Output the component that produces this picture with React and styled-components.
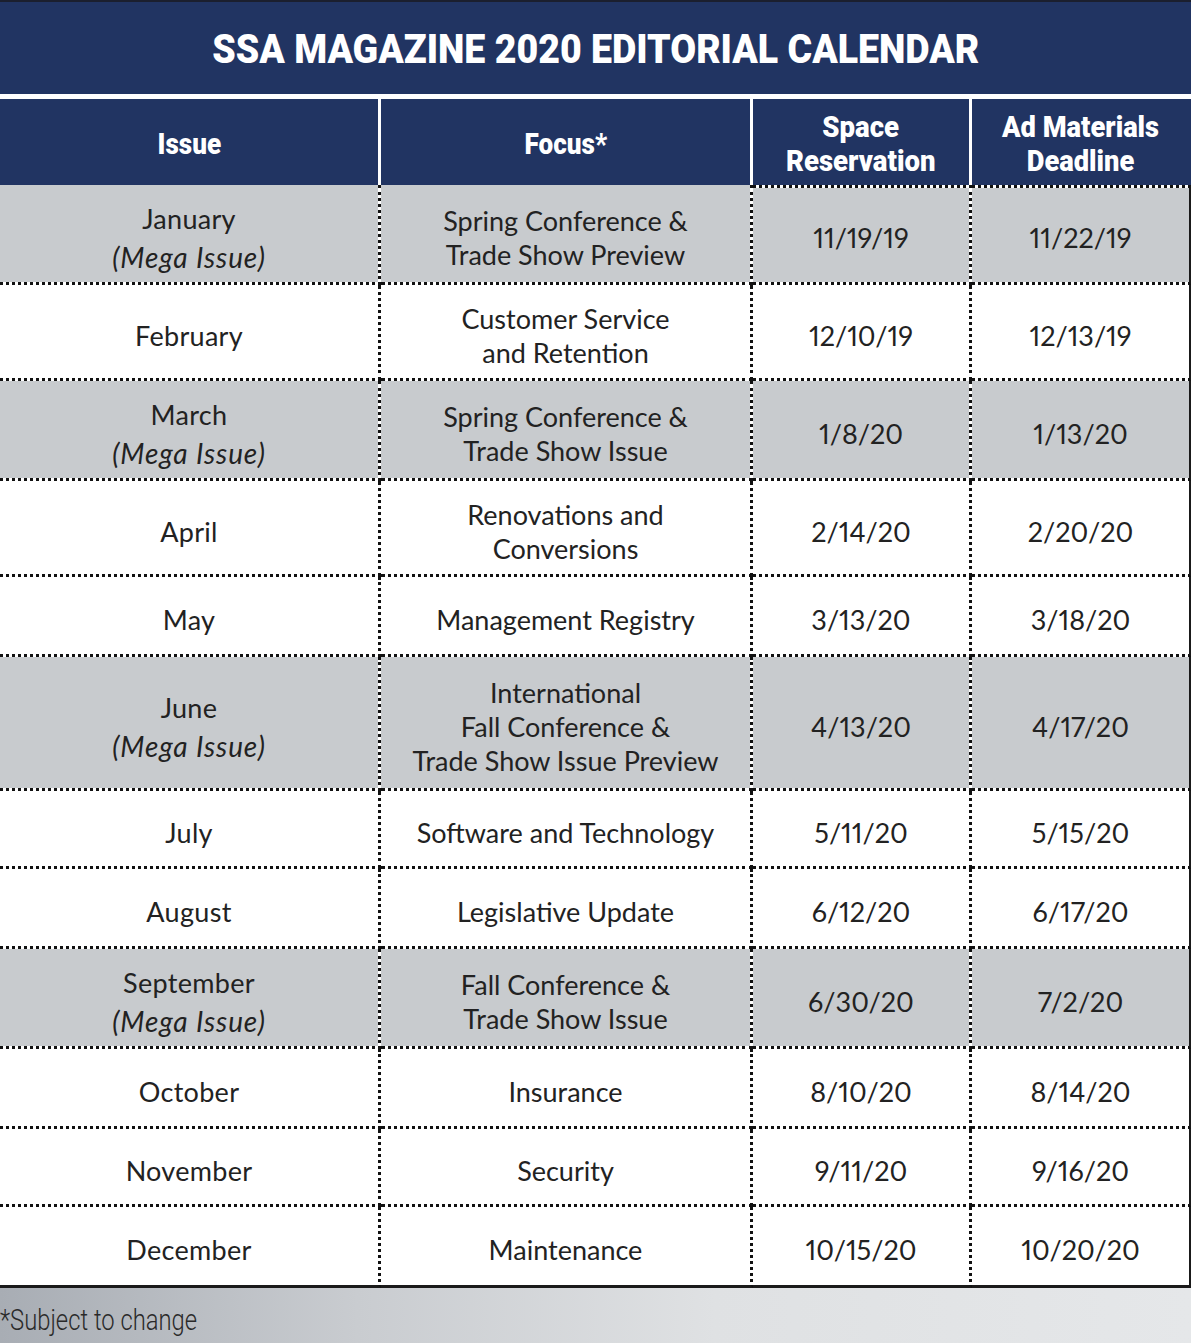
import React from "react";
import styled, { createGlobalStyle } from "styled-components";

const Global = createGlobalStyle`
  html, body { margin: 0; padding: 0; background: #ffffff; }
  body { font-family: "Lato", "Noto Sans", sans-serif; }
`;

const Page = styled.div`
  width: 1191px;
  display: flex;
  flex-direction: column;
  background: #ffffff;
`;

const TitleBar = styled.div`
  height: 94px;
  border-top: 2px solid #1b1f2e;
  background: #213462;
  display: flex;
  align-items: center;
  justify-content: center;
  color: #ffffff;
  font-family: "Roboto", sans-serif;
  font-weight: 900;
  font-size: 40px;
  padding-top: 2px;
  box-sizing: border-box;
`;

const Squeeze = styled.span`
  display: inline-block;
  transform: scaleX(${(p) => p.$x});
  transform-origin: ${(p) => p.$origin || "center"};
  white-space: nowrap;
`;

const Table = styled.div`
  margin-top: 5px;
  display: grid;
  grid-template-columns: 381px 372px 219px 219px;
`;

const HeaderCell = styled.div`
  height: 86px;
  background: #213462;
  color: #ffffff;
  display: flex;
  align-items: center;
  justify-content: center;
  text-align: center;
  font-family: "Roboto", sans-serif;
  font-weight: 900;
  font-size: 29px;
  line-height: 34px;
  box-sizing: border-box;
  padding-top: 4px;
  border-right: ${(p) => (p.$last ? "2px solid #213462" : "3px solid #ffffff")};
`;

const Cell = styled.div`
  height: ${(p) => p.$h}px;
  box-sizing: border-box;
  background: ${(p) => (p.$shade ? "#c8cbce" : "#ffffff")};
  background-clip: padding-box;
  border-bottom: ${(p) => (p.$end ? "3px solid #1a1a1a" : "3px dotted #111111")};
  border-right: ${(p) => (p.$last ? "2px solid #1a1a1a" : "3px dotted #111111")};
  border-top: ${(p) => (p.$top ? "3px dotted #111111" : "none")};
  display: flex;
  flex-direction: column;
  align-items: center;
  justify-content: center;
  text-align: center;
  color: #222222;
  font-family: "Lato", sans-serif;
  font-weight: 400;
  font-size: 27px;
  letter-spacing: ${(p) => (p.$issue ? "0.3px" : "0")};
  font-variant-numeric: proportional-nums;
  line-height: ${(p) => (p.$issue ? 38 : 34)}px;
  padding-top: ${(p) => (p.$top ? 5 : 8)}px;
`;

const Mega = styled.span`
  font-style: italic;
  font-size: 28px;
  letter-spacing: 0.9px;
`;

const Footer = styled.div`
  height: 55px;
  background: linear-gradient(90deg, #a8adb4 0%, #c9ccd0 30%, #dfe1e3 60%, #e5e7e9 100%);
  display: flex;
  align-items: center;
  padding-top: 8px;
  box-sizing: border-box;
  font-family: "Roboto", sans-serif;
  font-weight: 300;
  font-size: 29px;
  color: #2a2a2a;
`;

const rows = [
  { issue: "January", mega: true, focus: ["Spring Conference &", "Trade Show Preview"], space: "11/19/19", ad: "11/22/19", h: 100, shade: true },
  { issue: "February", focus: ["Customer Service", "and Retention"], space: "12/10/19", ad: "12/13/19", h: 96 },
  { issue: "March", mega: true, focus: ["Spring Conference &", "Trade Show Issue"], space: "1/8/20", ad: "1/13/20", h: 100, shade: true },
  { issue: "April", focus: ["Renovations and", "Conversions"], space: "2/14/20", ad: "2/20/20", h: 96 },
  { issue: "May", focus: ["Management Registry"], space: "3/13/20", ad: "3/18/20", h: 80 },
  { issue: "June", mega: true, focus: ["International", "Fall Conference &", "Trade Show Issue Preview"], space: "4/13/20", ad: "4/17/20", h: 134, shade: true },
  { issue: "July", focus: ["Software and Technology"], space: "5/11/20", ad: "5/15/20", h: 78 },
  { issue: "August", focus: ["Legislative Update"], space: "6/12/20", ad: "6/17/20", h: 80 },
  { issue: "September", mega: true, focus: ["Fall Conference &", "Trade Show Issue"], space: "6/30/20", ad: "7/2/20", h: 100, shade: true },
  { issue: "October", focus: ["Insurance"], space: "8/10/20", ad: "8/14/20", h: 80 },
  { issue: "November", focus: ["Security"], space: "9/11/20", ad: "9/16/20", h: 78 },
  { issue: "December", focus: ["Maintenance"], space: "10/15/20", ad: "10/20/20", h: 81 },
];

export default function App() {
  return (
    <Page>
      <Global />
      <TitleBar>
        <Squeeze $x={0.938}>SSA MAGAZINE 2020 EDITORIAL CALENDAR</Squeeze>
      </TitleBar>
      <Table>
        <HeaderCell>
          <Squeeze $x={0.9}>Issue</Squeeze>
        </HeaderCell>
        <HeaderCell>
          <Squeeze $x={0.9}>Focus*</Squeeze>
        </HeaderCell>
        <HeaderCell>
          <Squeeze $x={0.95}>
            Space
            <br />
            Reservation
          </Squeeze>
        </HeaderCell>
        <HeaderCell $last>
          <Squeeze $x={0.94}>
            Ad Materials
            <br />
            Deadline
          </Squeeze>
        </HeaderCell>
        {rows.map((r, i) => {
          const end = i === rows.length - 1;
          const top = i === 0;
          return (
            <React.Fragment key={r.issue}>
              <Cell $h={r.h} $shade={r.shade} $end={end} $issue>
                <span>{r.issue}</span>
                {r.mega && <Mega>(Mega Issue)</Mega>}
              </Cell>
              <Cell $h={r.h} $shade={r.shade} $end={end}>
                {r.focus.map((f) => (
                  <span key={f}>{f}</span>
                ))}
              </Cell>
              <Cell $h={r.h} $shade={r.shade} $end={end} $top={top}>
                {r.space}
              </Cell>
              <Cell $h={r.h} $shade={r.shade} $end={end} $top={top} $last>
                {r.ad}
              </Cell>
            </React.Fragment>
          );
        })}
      </Table>
      <Footer>
        <Squeeze $x={0.82} $origin="left">*Subject to change</Squeeze>
      </Footer>
    </Page>
  );
}
